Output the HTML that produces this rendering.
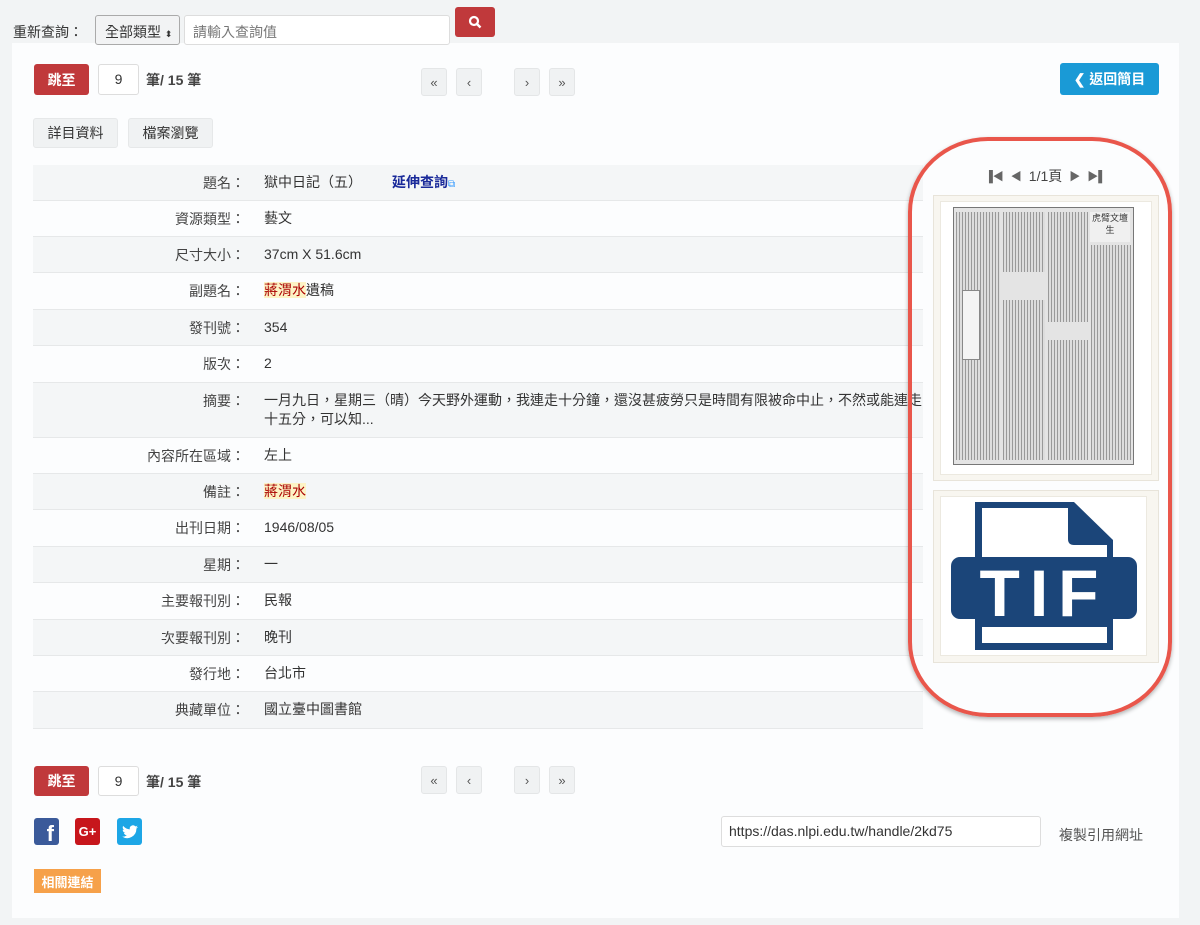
<!DOCTYPE html>
<html><head><meta charset="utf-8"><style>
*{box-sizing:border-box;margin:0;padding:0}
body{width:1200px;height:925px;background:#f2f4f5;font-family:"Liberation Sans","Noto Sans CJK TC",sans-serif;font-size:14px;color:#333;position:relative;overflow:hidden}
.abs{position:absolute}
.panel{left:12px;top:43px;width:1167px;height:875px;background:#fcfdfe}
.btnred{background:#c0393b;color:#fff;border-radius:3px;font-size:14px;display:flex;align-items:center;justify-content:center;font-weight:bold}
.inp{background:#fff;border:1px solid #ddd;border-radius:3px}
.pg{width:26px;height:28px;background:#f0f2f3;border:1px solid #e4e6e7;border-radius:3px;display:flex;align-items:center;justify-content:center;font-size:13px;color:#555}
.tab{height:30px;background:#f0f2f3;border:1px solid #e6e8e9;border-radius:3px;display:flex;align-items:center;justify-content:center;font-size:14px;color:#333}
.row{position:absolute;left:33px;width:890px;border-bottom:1px solid #e6e8e9;font-size:14px}
.row.g{background:#f4f6f7}
.lab{position:absolute;right:678px;top:8px;color:#444;white-space:nowrap}
.val{position:absolute;left:231px;top:8px;color:#333;white-space:nowrap;line-height:19px}
.hl{color:#a00;background:#fdf3c5}
.np{position:absolute;background:repeating-linear-gradient(90deg,#999 0 1px,#ddd 1px 3px)}
</style></head><body>
<div class="abs panel"></div>
<div class="abs" style="left:13px;top:22px;font-size:14px;color:#333">重新查詢：</div>
<div class="abs inp" style="left:95px;top:15px;width:85px;height:30px;background:#f2f3f4;border-color:#aaa;font-size:14px;padding:6px 0 0 9px">全部類型 <span style="font-size:9px">⬍</span></div>
<div class="abs inp" style="left:184px;top:15px;width:266px;height:30px;color:#777;padding:6px 0 0 8px">請輸入查詢值</div>
<div class="abs btnred" style="left:455px;top:7px;width:40px;height:30px"><svg width="14" height="14" viewBox="0 0 14 14"><circle cx="6" cy="6" r="4" stroke="#fff" stroke-width="2.2" fill="none"/><path d="M9 9l3.5 3.5" stroke="#fff" stroke-width="2.4"/></svg></div>

<div class="abs btnred" style="left:34px;top:64px;width:55px;height:31px">跳至</div>
<div class="abs inp" style="left:98px;top:64px;width:41px;height:31px;text-align:center;padding-top:6px">9</div>
<div class="abs" style="left:146px;top:70px;color:#444;font-weight:bold">筆/ 15 筆</div>
<div class="abs pg" style="left:421px;top:68px">«</div>
<div class="abs pg" style="left:456px;top:68px">‹</div>
<div class="abs pg" style="left:514px;top:68px">›</div>
<div class="abs pg" style="left:549px;top:68px">»</div>
<div class="abs" style="left:1060px;top:63px;width:99px;height:32px;background:#1a9ad6;border-radius:3px;color:#fff;font-weight:bold;display:flex;align-items:center;justify-content:center">❮ 返回簡目</div>

<div class="abs tab" style="left:33px;top:118px;width:85px">詳目資料</div>
<div class="abs tab" style="left:128px;top:118px;width:85px">檔案瀏覽</div>

<div class="row g" style="top:165px;height:36px"><span class="lab">題名：</span><span class="val">獄中日記（五）<b style="color:#1a2a9a;margin-left:30px">延伸查詢</b><span style="color:#39f;font-size:10px">⧉</span></span></div>
<div class="row" style="top:201px;height:36px"><span class="lab">資源類型：</span><span class="val">藝文</span></div>
<div class="row g" style="top:237px;height:36px"><span class="lab">尺寸大小：</span><span class="val">37cm X 51.6cm</span></div>
<div class="row" style="top:273px;height:37px"><span class="lab">副題名：</span><span class="val"><span class="hl">蔣渭水</span>遺稿</span></div>
<div class="row g" style="top:310px;height:36px"><span class="lab">發刊號：</span><span class="val">354</span></div>
<div class="row" style="top:346px;height:37px"><span class="lab">版次：</span><span class="val">2</span></div>
<div class="row g" style="top:383px;height:55px"><span class="lab">摘要：</span><span class="val" style="white-space:normal;width:660px">一月九日，星期三（晴）今天野外運動，我連走十分鐘，還沒甚疲勞只是時間有限被命中止，不然或能連走<br>十五分，可以知...</span></div>
<div class="row" style="top:438px;height:36px"><span class="lab">內容所在區域：</span><span class="val">左上</span></div>
<div class="row g" style="top:474px;height:36px"><span class="lab">備註：</span><span class="val"><span class="hl">蔣渭水</span></span></div>
<div class="row" style="top:510px;height:37px"><span class="lab">出刊日期：</span><span class="val">1946/08/05</span></div>
<div class="row g" style="top:547px;height:36px"><span class="lab">星期：</span><span class="val">一</span></div>
<div class="row" style="top:583px;height:37px"><span class="lab">主要報刊別：</span><span class="val">民報</span></div>
<div class="row g" style="top:620px;height:36px"><span class="lab">次要報刊別：</span><span class="val">晚刊</span></div>
<div class="row" style="top:656px;height:36px"><span class="lab">發行地：</span><span class="val">台北市</span></div>
<div class="row g" style="top:692px;height:37px"><span class="lab">典藏單位：</span><span class="val">國立臺中圖書館</span></div>

<div class="abs" style="left:908px;top:137px;width:264px;height:580px;border:4px solid #e9564b;border-radius:80px / 75px;box-shadow:0 2px 4px rgba(0,0,0,.3)"></div>
<div class="abs" style="left:985px;top:166px;font-size:14px;color:#666;display:flex;gap:7px;align-items:center"><span style="font-size:11px">▐◀</span><span style="font-size:11px">◀</span><span style="color:#444">1/1頁</span><span style="font-size:11px">▶</span><span style="font-size:11px">▶▌</span></div>
<div class="abs" style="left:933px;top:195px;width:226px;height:286px;background:#f8f6f0;border:1px solid #e8e4da"></div>
<div class="abs" style="left:940px;top:201px;width:212px;height:274px;background:#fff;border:1px solid #ece9e0"></div>
<div class="abs" style="left:953px;top:207px;width:181px;height:258px;background:#e4e4e4;border:1px solid #777"></div>
<div class="np" style="left:956px;top:212px;width:44px;height:248px"></div>
<div class="np" style="left:1003px;top:212px;width:42px;height:60px"></div>
<div class="np" style="left:1003px;top:300px;width:42px;height:160px"></div>
<div class="np" style="left:1048px;top:212px;width:40px;height:110px"></div>
<div class="np" style="left:1048px;top:340px;width:40px;height:120px"></div>
<div class="np" style="left:1091px;top:245px;width:40px;height:215px"></div>
<div class="abs" style="left:1090px;top:212px;width:40px;height:30px;background:#f0f0f0;font-size:9px;color:#333;text-align:center;line-height:12px">虎臂文壇生</div>
<div class="abs" style="left:962px;top:290px;width:18px;height:70px;background:#f4f4f4;border:1px solid #888"></div>
<div class="abs" style="left:933px;top:490px;width:226px;height:173px;background:#f8f6f0;border:1px solid #e8e4da"></div>
<div class="abs" style="left:940px;top:496px;width:207px;height:160px;background:#fff;border:1px solid #ece9e0"></div>
<svg class="abs" style="left:951px;top:502px" width="186" height="148" viewBox="0 0 186 148">
<path d="M24 0H123L162 38V148H24Z" fill="#1b4579"/>
<path d="M31 6H117V37Q117 43 123 43H156V60H31Z" fill="#fff"/>
<rect x="0" y="55" width="186" height="62" rx="9" fill="#1b4579"/>
<rect x="31" y="125" width="125" height="16" fill="#fff"/>
<text x="93" y="114" text-anchor="middle" font-family="Liberation Sans,sans-serif" font-weight="bold" font-size="66" fill="#fff" letter-spacing="10">TIF</text>
</svg>

<div class="abs btnred" style="left:34px;top:766px;width:55px;height:30px">跳至</div>
<div class="abs inp" style="left:98px;top:766px;width:41px;height:30px;text-align:center;padding-top:6px">9</div>
<div class="abs" style="left:146px;top:772px;color:#444;font-weight:bold">筆/ 15 筆</div>
<div class="abs pg" style="left:421px;top:766px">«</div>
<div class="abs pg" style="left:456px;top:766px">‹</div>
<div class="abs pg" style="left:514px;top:766px">›</div>
<div class="abs pg" style="left:549px;top:766px">»</div>

<div class="abs" style="left:34px;top:818px;width:25px;height:27px;background:#3b5a9a;border-radius:3px;color:#fff;font-weight:bold;font-size:22px;text-align:right;padding-right:5px;line-height:32px;overflow:hidden">f</div>
<div class="abs" style="left:75px;top:818px;width:25px;height:27px;background:#c7161c;border-radius:3px;color:#fff;font-weight:bold;font-size:13px;text-align:center;line-height:27px">G+</div>
<div class="abs" style="left:117px;top:818px;width:25px;height:27px;background:#1da6e6;border-radius:3px"><svg width="25" height="27" viewBox="0 0 24 24"><path d="M20 7.5c-.6.3-1.2.4-1.8.5.7-.4 1.1-1 1.4-1.7-.6.4-1.3.6-2 .8a3.1 3.1 0 0 0-5.3 2.8A8.8 8.8 0 0 1 5.9 6.6a3.1 3.1 0 0 0 1 4.1c-.5 0-1-.2-1.4-.4 0 1.5 1.1 2.8 2.5 3-.5.2-1 .2-1.4.1.4 1.2 1.5 2.1 2.9 2.2A6.2 6.2 0 0 1 5 16.9 8.8 8.8 0 0 0 18.6 9.2c.6-.4 1-.9 1.4-1.7z" fill="#fff"/></svg></div>

<div class="abs" style="left:34px;top:869px;width:67px;height:24px;background:#f6a14a;color:#fff;font-weight:bold;font-size:13px;display:flex;align-items:center;justify-content:center">相關連結</div>

<div class="abs inp" style="left:721px;top:816px;width:320px;height:31px;padding:6px 0 0 7px;color:#333">https://das.nlpi.edu.tw/handle/2kd75</div>
<div class="abs" style="left:1059px;top:825px;color:#555">複製引用網址</div>
</body></html>
